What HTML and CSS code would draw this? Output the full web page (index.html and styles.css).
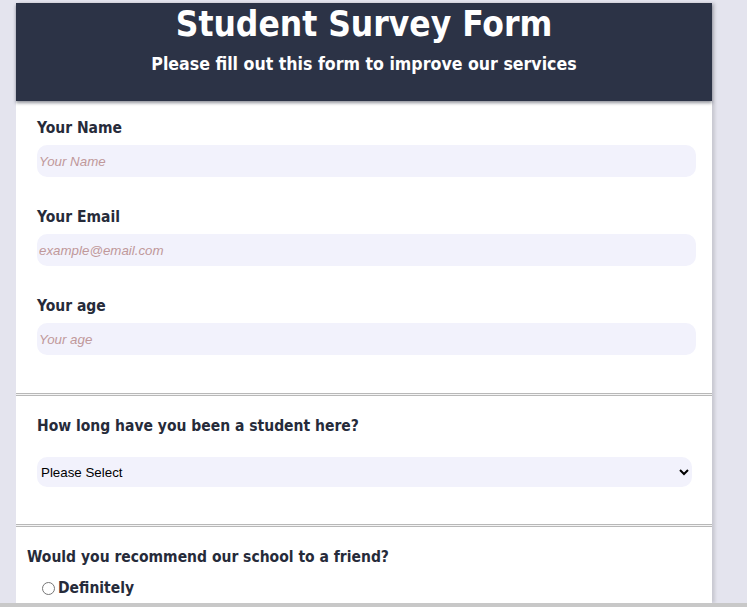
FILE: index.html
```html
<!DOCTYPE html>
<html lang="en">
<head>
<meta charset="utf-8">
<title>Student Survey Form</title>
<link rel="stylesheet" href="styles.css">
</head>
<body>
<div class="page">
  <header class="header">
    <h1 class="title">Student Survey Form</h1>
    <p class="subtitle">Please fill out this form to improve our services</p>
  </header>
  <form class="form">
    <section class="section section-info">
      <div class="group">
        <label class="label" for="name">Your Name</label>
        <input class="field" id="name" type="text" placeholder="Your Name">
      </div>
      <div class="group">
        <label class="label" for="email">Your Email</label>
        <input class="field" id="email" type="email" placeholder="example@email.com">
      </div>
      <div class="group">
        <label class="label" for="age">Your age</label>
        <input class="field" id="age" type="number" placeholder="Your age">
      </div>
    </section>
    <div class="sep"></div>
    <section class="section section-select">
      <label class="label" for="years">How long have you been a student here?</label>
      <select class="select" id="years">
        <option>Please Select</option>
      </select>
    </section>
    <div class="sep"></div>
    <section class="section section-radio">
      <p class="question">Would you recommend our school to a friend?</p>
      <label class="radio"><input type="radio" name="rec"><span>Definitely</span></label>
    </section>
  </form>
</div>
<div class="hbar"></div>
</body>
</html>
```
FILE: styles.css
```css
html, body {
  margin: 0;
  padding: 0;
}
body {
  background: #e4e4ee;
  font-family: "DejaVu Sans", Verdana, sans-serif;
  color: #262b3a;
  height: 607px;
  overflow: hidden;
}
.page {
  width: 696px;
  margin: 3px 0 0 16px;
  background: #fff;
  box-shadow: 3px 0 3px rgba(0,0,0,0.12);
}
.header {
  background: #2c3346;
  height: 98px;
  box-sizing: border-box;
  padding-top: 1px;
  color: #fff;
  text-align: center;
  box-shadow: 0 2px 3px rgba(40,44,60,0.5);
  position: relative;
  display: flex;
  flex-direction: column;
  align-items: center;
}
.title {
  margin: 0;
  font-size: 35px;
  font-weight: bold;
  line-height: 40px;
  font-stretch: condensed;
}
.subtitle {
  margin: 10px 0 0;
  font-size: 17.6px;
  font-weight: bold;
  line-height: 20px;
  font-stretch: condensed;
}
.form {
  display: flex;
  flex-direction: column;
}
.section {
  padding: 0 16px 0 21px;
  display: flex;
  flex-direction: column;
}
.section-info {
  padding-top: 18px;
  gap: 31px;
  box-sizing: border-box;
  height: 292px;
}
.group {
  display: flex;
  flex-direction: column;
  gap: 8px;
}
.label {
  font-size: 15.5px;
  font-weight: bold;
  line-height: 18px;
  font-stretch: condensed;
}
.field {
  height: 32px;
  box-sizing: border-box;
  border: none;
  border-radius: 10px;
  background: #f2f2fc;
  padding: 0 2px;
  font-family: "Liberation Sans", Arial, sans-serif;
  font-size: 13.333px;
  outline: none;
}
.field::placeholder {
  color: #c0989a;
  font-style: italic;
}
.sep {
  height: 1px;
  background: #f4f4f4;
  border-top: 1px solid #b8b8b8;
  border-bottom: 1px solid #b8b8b8;
}
.section-select {
  height: 128px;
  box-sizing: border-box;
  padding-top: 21px;
  padding-right: 20px;
  gap: 22px;
}
.select {
  height: 30px;
  border: none;
  border-radius: 10px;
  background: #f2f2fc;
  font-family: "Liberation Sans", Arial, sans-serif;
  font-size: 13.333px;
  color: #000;
  outline: none;
}
.section-radio {
  padding-left: 11px;
  padding-top: 21px;
  height: 76px;
  box-sizing: border-box;
}
.question {
  margin: 0;
  font-size: 15.5px;
  font-weight: bold;
  line-height: 18px;
  font-stretch: condensed;
}
.radio {
  display: flex;
  align-items: center;
  margin-top: 13px;
  padding-left: 15px;
  font-size: 15.5px;
  font-weight: bold;
  font-stretch: condensed;
}
.radio input {
  margin: 0 3px 0 0;
  width: 13px;
  height: 13px;
}
.hbar {
  position: fixed;
  left: 0;
  right: 0;
  bottom: 0;
  height: 4px;
  background: #c8c8c8;
}
```
